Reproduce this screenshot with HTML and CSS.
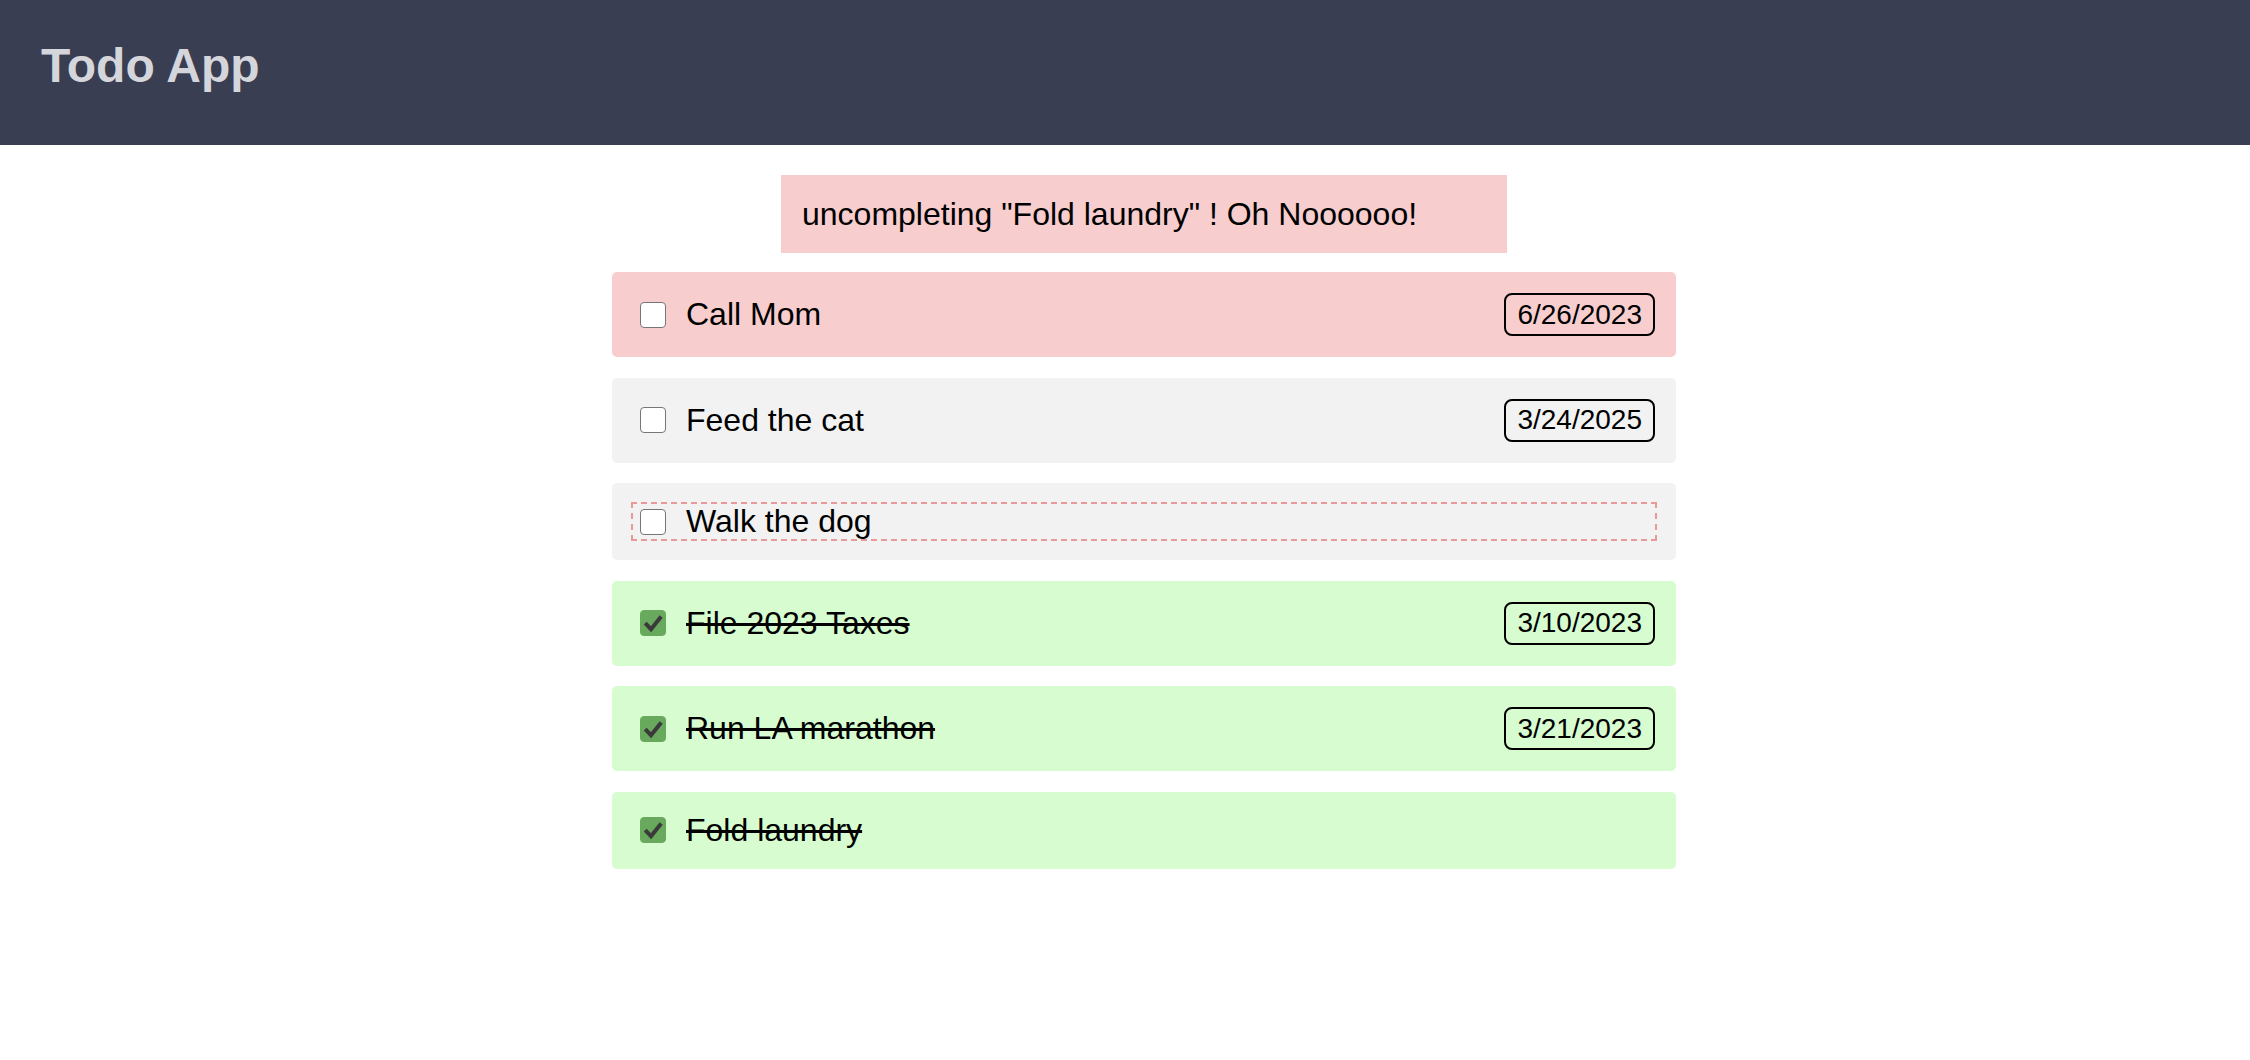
FILE: index.html
```html
<!DOCTYPE html>
<html lang="en">
<head>
<meta charset="utf-8">
<title>Todo App</title>
<link rel="stylesheet" href="styles.css">
</head>
<body>
<header class="app-header">
  <h1 class="app-title">Todo App</h1>
</header>
<main class="app-main">
  <div class="notice">uncompleting "Fold laundry" ! Oh Noooooo!</div>
  <ul class="todo-list">
    <li class="todo todo-overdue">
      <label class="todo-label">
        <span class="box"></span>
        <span class="todo-text">Call Mom</span>
      </label>
      <span class="due">6/26/2023</span>
    </li>
    <li class="todo todo-open">
      <label class="todo-label">
        <span class="box"></span>
        <span class="todo-text">Feed the cat</span>
      </label>
      <span class="due">3/24/2025</span>
    </li>
    <li class="todo todo-open">
      <label class="todo-label todo-label-focus">
        <span class="box"></span>
        <span class="todo-text">Walk the dog</span>
      </label>
    </li>
    <li class="todo todo-done">
      <label class="todo-label">
        <span class="box box-checked"><svg viewBox="0 0 26 26" width="26" height="26"><path d="M5.2 13.2 L11 19.2 L21.2 6.4" fill="none" stroke="#3a3a3a" stroke-width="4" stroke-linecap="butt" stroke-linejoin="miter"/></svg></span>
        <span class="todo-text">File 2023 Taxes</span>
      </label>
      <span class="due">3/10/2023</span>
    </li>
    <li class="todo todo-done">
      <label class="todo-label">
        <span class="box box-checked"><svg viewBox="0 0 26 26" width="26" height="26"><path d="M5.2 13.2 L11 19.2 L21.2 6.4" fill="none" stroke="#3a3a3a" stroke-width="4" stroke-linecap="butt" stroke-linejoin="miter"/></svg></span>
        <span class="todo-text">Run LA marathon</span>
      </label>
      <span class="due">3/21/2023</span>
    </li>
    <li class="todo todo-done">
      <label class="todo-label">
        <span class="box box-checked"><svg viewBox="0 0 26 26" width="26" height="26"><path d="M5.2 13.2 L11 19.2 L21.2 6.4" fill="none" stroke="#3a3a3a" stroke-width="4" stroke-linecap="butt" stroke-linejoin="miter"/></svg></span>
        <span class="todo-text">Fold laundry</span>
      </label>
    </li>
  </ul>
</main>
</body>
</html>
```
FILE: styles.css
```css
* { box-sizing: border-box; }

html, body {
  margin: 0;
  padding: 0;
  background: #ffffff;
  font-family: "Liberation Sans", Arial, sans-serif;
  color: #000;
}

.app-header {
  height: 145px;
  background: #3a3e53;
  padding: 38px 41px 0;
}

.app-title {
  margin: 0;
  font-size: 48px;
  font-weight: 700;
  line-height: normal;
  color: #d5d6db;
}

.app-main {
  width: 1064px;
  margin-left: 612px;
  padding-top: 30px;
  display: flex;
  flex-direction: column;
  align-items: center;
}

.notice {
  width: 726px;
  background: #f7cdce;
  padding: 21px;
  font-size: 32px;
  line-height: 36px;
  margin-bottom: 19px;
}

.todo-list {
  list-style: none;
  margin: 0;
  padding: 0;
  width: 100%;
  display: flex;
  flex-direction: column;
  gap: 20.5px;
}

.todo {
  display: flex;
  align-items: center;
  padding: 21px;
  border-radius: 5px;
  font-size: 32px;
}

.todo-overdue { background: #f7cdce; }
.todo-open { background: #f2f2f2; }
.todo-done { background: #d6fcd0; }

.todo-label {
  flex: 1;
  display: flex;
  align-items: center;
  gap: 20px;
  line-height: 35px;
  min-height: 35px;
}

.todo-label-focus {
  outline: 2px dashed #e89a9a;
}

.box {
  width: 26px;
  height: 26px;
  margin-left: 7px;
  border: 1.75px solid #767676;
  border-radius: 4px;
  background: #fff;
  flex: none;
  display: flex;
  align-items: center;
  justify-content: center;
}

.box-checked {
  background: #69a95e;
  border-color: #69a95e;
}

.box-checked svg {
  display: block;
  flex: none;
}

.todo-done .todo-text {
  text-decoration: line-through;
  text-decoration-color: #000;
  text-decoration-thickness: 2.5px;
}

.due {
  flex: none;
  font-size: 28px;
  line-height: 32px;
  padding: 3.5px 11px;
  border: 2px solid #000;
  border-radius: 8px;
}
```
